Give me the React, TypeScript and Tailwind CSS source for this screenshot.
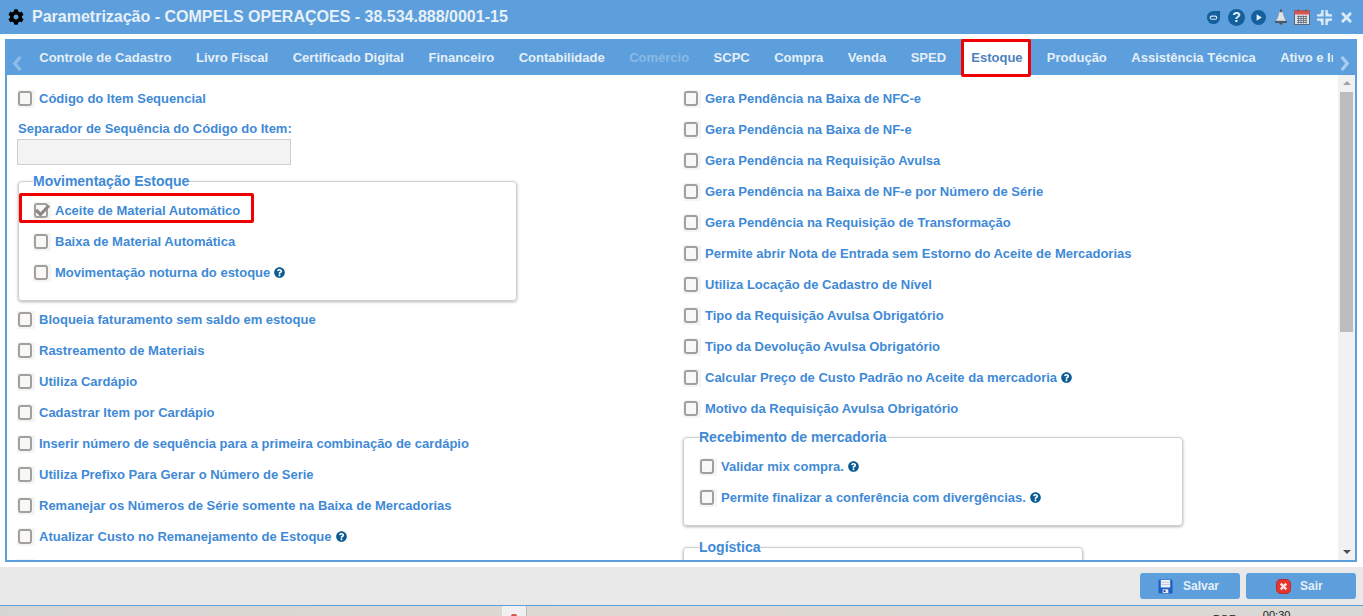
import React from 'react';
import { FaCog, FaQuestionCircle, FaTimes } from 'react-icons/fa';

const tabs = [
  'Controle de Cadastro',
  'Livro Fiscal',
  'Certificado Digital',
  'Financeiro',
  'Contabilidade',
  'Comércio',
  'SCPC',
  'Compra',
  'Venda',
  'SPED',
  'Estoque',
  'Produção',
  'Assistência Técnica',
  'Ativo e Imobilizado',
];

const leftRows: { label: string; help?: boolean }[] = [
  { label: 'Bloqueia faturamento sem saldo em estoque' },
  { label: 'Rastreamento de Materiais' },
  { label: 'Utiliza Cardápio' },
  { label: 'Cadastrar Item por Cardápio' },
  { label: 'Inserir número de sequência para a primeira combinação de cardápio' },
  { label: 'Utiliza Prefixo Para Gerar o Número de Serie' },
  { label: 'Remanejar os Números de Série somente na Baixa de Mercadorias' },
  { label: 'Atualizar Custo no Remanejamento de Estoque', help: true },
];

const rightRows: { label: string; help?: boolean }[] = [
  { label: 'Gera Pendência na Baixa de NFC-e' },
  { label: 'Gera Pendência na Baixa de NF-e' },
  { label: 'Gera Pendência na Requisição Avulsa' },
  { label: 'Gera Pendência na Baixa de NF-e por Número de Série' },
  { label: 'Gera Pendência na Requisição de Transformação' },
  { label: 'Permite abrir Nota de Entrada sem Estorno do Aceite de Mercadorias' },
  { label: 'Utiliza Locação de Cadastro de Nível' },
  { label: 'Tipo da Requisição Avulsa Obrigatório' },
  { label: 'Tipo da Devolução Avulsa Obrigatório' },
  { label: 'Calcular Preço de Custo Padrão no Aceite da mercadoria', help: true },
  { label: 'Motivo da Requisição Avulsa Obrigatório' },
];

function Check({ checked }: { checked?: boolean }) {
  return (
    <span className="relative flex h-[18px] w-[18px] shrink-0 items-start justify-start bg-[#f5f5f5] pl-[1px] pt-[1px]">
      <span className="h-[15px] w-[14px] rounded-[3px] border-2 border-[#a3a09c] bg-[#f8f8f8]" />
      {checked && (
        <svg viewBox="0 0 18 18" className="absolute inset-0 h-[18px] w-[18px]">
          <path d="M3 8 L7.5 12.5 L16 3.5" fill="none" stroke="#8c8782" strokeWidth="3.2" />
        </svg>
      )}
    </span>
  );
}

function Row({ label, help, checked }: { label?: string; help?: boolean; checked?: boolean }) {
  return (
    <div className="flex h-[31px] items-center">
      <Check checked={checked} />
      <span className="ml-1 whitespace-nowrap text-[13px] font-bold text-[#3f8ad6]">{label}</span>
      {help && <FaQuestionCircle className="ml-[4px] text-[11px] text-[#0b5a94]" />}
    </div>
  );
}

function Group({ title, className, children }: { title: string; className: string; children?: React.ReactNode }) {
  return (
    <fieldset className={`rounded-[4px] border border-[#cfcfcf] shadow-[0_1px_3px_rgba(0,0,0,0.3)] ${className}`}>
      <legend className="text-[14px] font-bold leading-[16px] text-[#3f8ad6]">{title}</legend>
      {children}
    </fieldset>
  );
}

function TopIcons() {
  return (
    <div className="flex items-center">
      <svg viewBox="0 0 16 16" className="h-[15px] w-[15px]">
        <path d="M8 1 H15 V8 A7 7 0 1 1 8 1Z" fill="#14609c" />
        <rect x="4.5" y="6.5" width="7" height="3.4" rx="1.7" fill="none" stroke="#d7e6f3" strokeWidth="1.2" />
      </svg>
      <span className="ml-[7px] flex h-[17px] w-[17px] items-center justify-center rounded-full bg-[#14609c] text-[14px] font-bold leading-none text-[#e4eef7]">?</span>
      <svg viewBox="0 0 16 16" className="ml-[6px] h-[15px] w-[15px]">
        <circle cx="8" cy="8" r="8" fill="#14609c" />
        <path d="M6 4.5 L11.5 8 L6 11.5Z" fill="#e4eef7" />
      </svg>
      <svg viewBox="0 0 14 16" className="ml-[8px] h-[16px] w-[14px]">
        <rect x="6" y="0.5" width="2" height="2.5" fill="#4a5560" />
        <path d="M5 3 H9 C9.8 6 10 9 12.5 12 H1.5 C4 9 4.2 6 5 3Z" fill="#dfe3e8" stroke="#7b8894" strokeWidth="0.6" />
        <rect x="1" y="12" width="12" height="2" fill="#4a5a6c" />
        <rect x="5.5" y="14" width="3" height="1.5" fill="#4a5560" />
      </svg>
      <svg viewBox="0 0 16 16" className="ml-[6px] h-[16px] w-[16px]">
        <rect x="0.5" y="1.5" width="15" height="14" fill="#dfe3e8" stroke="#5b6676" />
        <rect x="0.5" y="1.5" width="15" height="4" fill="#d9534f" />
        <path d="M3 7.5H13M3 9.5H13M3 11.5H13M3 13.5H13M4.5 6.5V14.5M7 6.5V14.5M9.5 6.5V14.5M12 6.5V14.5" stroke="#5b6676" strokeWidth="0.8" />
        <path d="M4 0V3M12 0V3" stroke="#5b6676" />
      </svg>
      <svg viewBox="0 0 16 16" className="ml-[7px] h-[15px] w-[15px]">
        <path d="M4.5 0H7V7H0V4.5H3L4.5 3ZM9 0H11.5V3L13 4.5H16V7H9ZM0 9H7V16H4.5V13L3 11.5H0ZM9 9H16V11.5H13L11.5 13V16H9Z" fill="#dcebf8" />
      </svg>
      <FaTimes className="ml-[7px] text-[15px] text-[#dcebf8]" />
    </div>
  );
}

export default function App() {
  return (
    <div className="flex h-[616px] w-[1363px] flex-col overflow-hidden bg-white font-['Liberation_Sans',Arial,sans-serif]">
      {/* Title bar */}
      <div className="flex h-[34px] shrink-0 items-center justify-between bg-[#5c9fdc] pl-[8px] pr-[9px]">
        <div className="flex items-center">
          <FaCog className="text-[16px] text-black" />
          <span className="ml-2 text-[16px] font-bold text-[#e8f0f8]">Parametrização - COMPELS OPERAÇOES - 38.534.888/0001-15</span>
        </div>
        <TopIcons />
      </div>

      {/* Panel */}
      <div className="flex shrink-0 flex-col px-[5px] pt-[5px] pb-[5px]">
        <div className="flex h-[523px] w-[1352px] flex-col border-2 border-t-0 border-[#5c9fdc]">
          {/* Tabs */}
          <div className="flex h-[36px] shrink-0 items-start bg-[#5c9fdc]">
            <span className="flex h-[36px] w-[20px] shrink-0 items-center justify-center pt-[12px] text-[#8fbde8]">
              <svg viewBox="0 0 10 16" className="h-[15px] w-[11px]"><path d="M8 1 L2 8 L8 15" fill="none" stroke="currentColor" strokeWidth="3.4" /></svg>
            </span>
            <div className="relative z-10 flex h-[38px] flex-1 items-start overflow-hidden">
              {tabs.map((t) =>
                t === 'Estoque' ? (
                  <span key={t} className="ml-[3px] mr-[4px] flex h-[38px] shrink-0 items-center rounded-[2px] border-[3px] border-[#f00000] bg-white pb-[1px] pl-[7px] pr-[5px] text-[13px] font-bold text-[#4d82bd]">
                    {t}
                  </span>
                ) : (
                  <span key={t} className={`flex h-[36px] shrink-0 items-center whitespace-nowrap px-[12.25px] pt-[1px] text-[13px] font-bold ${t === 'Comércio' ? 'text-[#8ab9e6]' : 'text-[#e6eff8]'}`}>
                    {t}
                  </span>
                )
              )}
            </div>
            <span className="flex h-[36px] w-[22px] shrink-0 items-center justify-center pt-[12px] text-[#a9cdef]">
              <svg viewBox="0 0 10 16" className="h-[15px] w-[11px]"><path d="M2 1 L8 8 L2 15" fill="none" stroke="currentColor" strokeWidth="3.4" /></svg>
            </span>
          </div>

          {/* Body */}
          <div className="flex min-h-0 flex-1">
            <div className="flex min-w-0 flex-1 overflow-hidden pl-[10px] pt-[8px]">
              <div className="w-[666px] shrink-0">
                <Row label="Código do Item Sequencial" />
                <div className="ml-[1px] mt-[7px] text-[13px] font-bold leading-[15px] text-[#3f8ad6]">Separador de Sequência do Código do Item:</div>
                <div className="mt-[3px] h-[26px] w-[274px] border border-[#cfcfcf] bg-[#f3f3f3]" />
                <Group title="Movimentação Estoque" className="ml-[1px] mt-[8px] h-[128px] w-[499px] pl-[14px] pt-[6px]">
                  <div className="relative">
                    <Row label="Aceite de Material Automático" checked />
                    <span className="absolute left-[-14px] top-[-2px] h-[30px] w-[235px] rounded-[2px] border-[3px] border-[#f00000]" />
                  </div>
                  <Row label="Baixa de Material Automática" />
                  <Row label="Movimentação noturna do estoque" help />
                </Group>
                <div className="mt-[3px]">
                  {leftRows.map((r) => (
                    <Row key={r.label} label={r.label} help={r.help} />
                  ))}
                  <Row />
                </div>
              </div>
              <div className="w-[520px] shrink-0">
                {rightRows.map((r) => (
                  <Row key={r.label} label={r.label} help={r.help} />
                ))}
                <Group title="Recebimento de mercadoria" className="mt-[5px] h-[97px] w-[500px] pl-[15px] pt-[6px]">
                  <Row label="Validar mix compra." help />
                  <Row label="Permite finalizar a conferência com divergências." help />
                </Group>
                <Group title="Logística" className="mt-[13px] h-[60px] w-[400px] pl-[15px]" />
              </div>
            </div>
            {/* Scrollbar */}
            <div className="flex w-[17px] shrink-0 flex-col items-center bg-[#f1f1f1]">
              <span className="mt-[6px] h-0 w-0 border-x-[4px] border-b-[4px] border-x-transparent border-b-[#a3a3a3]" />
              <span className="mt-[7px] h-[240px] w-[13px] bg-[#bdbdbd]" />
              <span className="mt-auto mb-[6px] h-0 w-0 border-x-[4px] border-t-[4px] border-x-transparent border-t-[#505050]" />
            </div>
          </div>
        </div>
      </div>

      {/* Footer */}
      <div className="flex h-[39px] shrink-0 items-start justify-end gap-[6px] border-b border-[#5c9fdc] bg-[#e9e9e9] pr-[7px] pt-[6px]">
        <button className="flex h-[26px] w-[100px] items-center rounded-[3px] bg-[#5c9fdc] pl-[18px] text-[12px] font-bold text-[#e6eff8]">
          <svg viewBox="0 0 16 16" className="h-[15px] w-[15px]">
            <rect x="0.5" y="0.5" width="15" height="15" rx="1.5" fill="#1d5fc4" />
            <rect x="3" y="1" width="10" height="8" fill="#f2f4f7" />
            <path d="M3 3.5H13M3 6H13" stroke="#b9c4d4" />
            <rect x="5" y="11" width="6" height="4" fill="#e8ebf0" />
            <rect x="6" y="12" width="2" height="2" fill="#1d3f7a" />
          </svg>
          <span className="ml-[10px]">Salvar</span>
        </button>
        <button className="flex h-[26px] w-[110px] items-center rounded-[3px] bg-[#5c9fdc] pl-[30px] text-[12px] font-bold text-[#e6eff8]">
          <svg viewBox="0 0 16 16" className="h-[15px] w-[15px]">
            <rect x="0.5" y="0.5" width="15" height="15" rx="4.5" fill="#e8342f" stroke="#b92a26" />
            <path d="M5 5L11 11M11 5L5 11" stroke="#fbe3e2" strokeWidth="2.6" />
          </svg>
          <span className="ml-[9px]">Sair</span>
        </button>
      </div>

      {/* Desktop behind the window */}
      <div className="flex h-[10px] shrink-0 items-start overflow-hidden bg-gradient-to-r from-[#d6d6d3] via-[#e0d8d2] to-[#d8d8d4] text-[11px] leading-[13px] text-[#222]">
        <span className="ml-[502px] flex h-[10px] w-[25px] justify-center border-r border-[#bbb] bg-[#f0f0f0]">
          <span className="mt-[8px] h-[2px] w-[6px] rounded-t-full bg-[#d9534f]" />
        </span>
        <span className="ml-[686px] pt-[7px]">POR</span>
        <span className="ml-[26px] pt-[3px]">00:30</span>
      </div>
    </div>
  );
}
